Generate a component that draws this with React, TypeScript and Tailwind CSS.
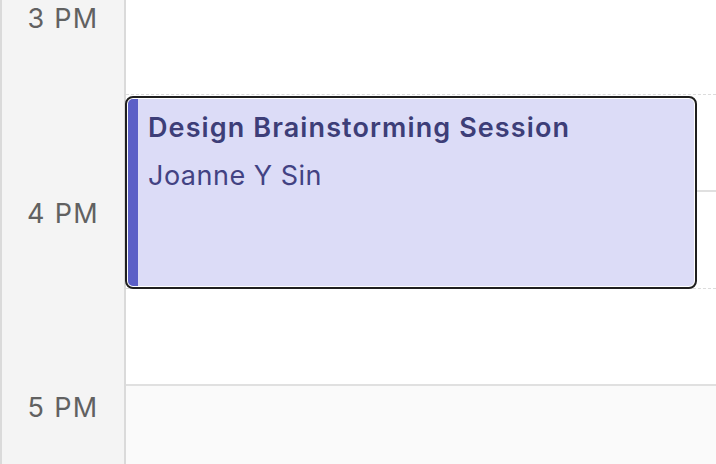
const hours = ["3 PM", "4 PM", "5 PM"];

export default function App() {
  return (
    <div className="relative flex h-[464px] w-[716px] overflow-hidden bg-white font-['Inter',sans-serif]">
      {/* time column */}
      <div className="flex w-[126px] shrink-0 flex-col border-l-2 border-r-2 border-[#dadada] bg-[#f4f4f4]">
        <div className="-mt-[3px]">
          {hours.map((h, i) => (
            <div
              key={h}
              className={`text-center text-[27px] leading-[44px] tracking-[1.3px] text-[#616161] ${i === 0 ? "h-[195px]" : "h-[194px]"}`}
            >
              {h}
            </div>
          ))}
        </div>
      </div>

      {/* day column */}
      <div className="relative flex-1">
        <div className="-mt-[2px] flex flex-col">
          <div className="h-[97px] border-b border-dashed border-[#dcdcdc]" />
          <div className="h-[97px] border-b-2 border-[#e0e0e0]" />
          <div className="h-[97px] border-b border-dashed border-[#dcdcdc]" />
          <div className="h-[97px] border-b-2 border-[#e0e0e0]" />
          <div className="h-[200px] bg-[#fafafa]" />
        </div>

        {/* event */}
        <div className="absolute left-[-1px] top-[96px] h-[193px] w-[572px] rounded-[8px] border-2 border-[#1f1f1f] bg-white p-[1px]">
          <div className="flex h-full overflow-hidden rounded-[5px] bg-[#dcdcf7]">
            <div className="w-[10px] shrink-0 bg-[#5b5fc7]" />
            <div className="flex flex-col pl-[10px] pt-[12px] text-[#3d3e78]">
              <div className="text-[27px] font-semibold leading-[34px] tracking-[1.1px]">Design Brainstorming Session</div>
              <div className="mt-[14px] text-[27px] leading-[34px] tracking-[0.5px] text-[#424283]">Joanne Y Sin</div>
            </div>
          </div>
        </div>
      </div>
    </div>
  );
}
